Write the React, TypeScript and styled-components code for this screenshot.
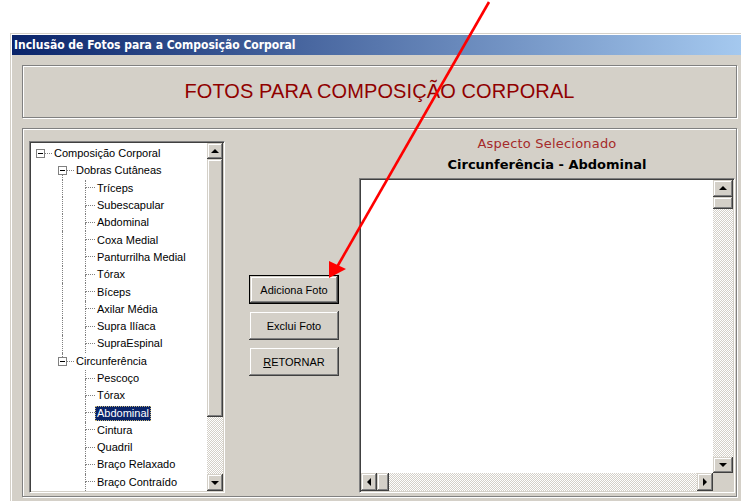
import React from 'react';
import styled, { createGlobalStyle, css } from 'styled-components';

const GlobalStyle = createGlobalStyle`
  html, body {
    margin: 0;
    padding: 0;
    background: #fff;
    overflow: hidden;
  }
  body {
    font-family: "Liberation Sans", Arial, sans-serif;
  }
`;

// classic 3D edges
const raised = css`
  background: #d4d0c8;
  box-shadow: inset -1px -1px #404040, inset 1px 1px #d4d0c8,
    inset -2px -2px #808080, inset 2px 2px #fff;
`;

const sunken = css`
  border: 1px solid;
  border-color: #808080 #fff #fff #808080;
  box-shadow: inset 1px 1px #404040, inset -1px -1px #d4d0c8;
  padding: 1px;
`;

const etched = css`
  border: 1px solid #808080;
  box-shadow: inset 1px 1px #fff, 1px 1px 0 #fff;
`;

const Page = styled.div`
  position: relative;
  width: 741px;
  height: 501px;
  padding: 33px 0 0 10px;
  box-sizing: border-box;
  overflow: hidden;
`;

const Window = styled.div`
  width: 739px;
  height: 480px;
  padding: 2px;
  box-sizing: border-box;
  background: #d4d0c8;
  box-shadow: inset 1px 1px #d4d0c8, inset 2px 2px #fff;
  display: flex;
  flex-direction: column;
`;

const TitleBar = styled.div`
  height: 20px;
  flex: none;
  display: flex;
  align-items: center;
  padding-left: 2px;
  background: linear-gradient(to right, #0a246a, #a6caf0);
  color: #fff;
  font-family: "DejaVu Sans Condensed", "DejaVu Sans", sans-serif;
  font-stretch: condensed;
  font-weight: bold;
  font-size: 12px;
  white-space: nowrap;
`;

const Body = styled.div`
  flex: 1;
  display: flex;
  flex-direction: column;
  gap: 10px;
  padding: 10px 10px 0 10px;
`;

const Header = styled.div`
  ${etched};
  height: 53px;
  box-sizing: border-box;
  display: flex;
  align-items: center;
  justify-content: center;
  color: #900000;
  font-size: 20px;
  letter-spacing: 0.1px;
`;

const MainPanel = styled.div`
  ${etched};
  height: 369px;
  box-sizing: border-box;
  display: flex;
  align-items: flex-start;
  padding: 6px 1px 0 6px;
`;

/* ---------- tree view ---------- */

const TreeBox = styled.div`
  ${sunken};
  width: 196px;
  height: 352px;
  margin-top: 6px;
  box-sizing: border-box;
  display: flex;
  background: #fff;
`;

const TreeList = styled.div`
  flex: 1;
  overflow: hidden;
  padding-top: 2px;
`;

const Row = styled.div<{ $indent: number }>`
  height: 17.3px;
  display: flex;
  align-items: stretch;
  padding-left: ${(p) => p.$indent}px;
`;

const ExpanderCell = styled.div`
  width: 9px;
  flex: none;
  display: flex;
  flex-direction: column;
  align-items: center;
`;

const StubLine = styled.div<{ $on: boolean }>`
  flex: 1;
  width: 0;
  border-left: 1px dotted ${(p) => (p.$on ? '#808080' : 'transparent')};
`;

const ExpandBox = styled.div`
  width: 9px;
  height: 9px;
  box-sizing: border-box;
  border: 1px solid #808080;
  background: #fff;
  display: flex;
  align-items: center;
  justify-content: center;
  flex: none;
`;

const Minus = styled.span`
  width: 5px;
  height: 1px;
  background: #000;
`;

const Tick = styled.div`
  width: 7px;
  align-self: center;
  border-top: 1px dotted #808080;
`;

const Guide = styled.div<{ $on: boolean }>`
  width: 23px;
  flex: none;
  box-sizing: border-box;
  border-left: 1px dotted ${(p) => (p.$on ? '#808080' : 'transparent')};
`;

const Connector = styled.div`
  width: 10px;
  flex: none;
  display: flex;
  flex-direction: column;
`;

const ConnectorTop = styled.div`
  height: 50%;
  box-sizing: border-box;
  border-left: 1px dotted #808080;
  border-bottom: 1px dotted #808080;
`;

const ConnectorBottom = styled.div`
  flex: 1;
  border-left: 1px dotted #808080;
`;

const Label = styled.span<{ $selected?: boolean }>`
  align-self: center;
  padding: 0 2px;
  height: 15px;
  line-height: 15px;
  font-size: 11px;
  color: #000;
  white-space: nowrap;
  ${(p) =>
    p.$selected &&
    css`
      background: #0a246a;
      color: #fff;
      outline: 1px dotted #c8b878;
      outline-offset: -1px;
    `}
`;

/* ---------- scroll bars ---------- */

const VScroll = styled.div<{ $width: number }>`
  width: ${(p) => p.$width}px;
  flex: none;
  display: flex;
  flex-direction: column;
`;

const HScroll = styled.div`
  display: flex;
  height: 100%;
`;

const ArrowButton = styled.div<{ $w: number; $h: number }>`
  ${raised};
  width: ${(p) => p.$w}px;
  height: ${(p) => p.$h}px;
  flex: none;
  display: flex;
  align-items: center;
  justify-content: center;
`;

const Thumb = styled.div<{ $w: number; $h: number }>`
  ${raised};
  width: ${(p) => p.$w}px;
  height: ${(p) => p.$h}px;
  flex: none;
`;

const Track = styled.div`
  flex: 1;
  background: repeating-conic-gradient(#d4d0c8 0 25%, #fff 0 50%) 0 0 / 2px 2px;
`;

const Arrow = styled.span<{ $dir: 'up' | 'down' | 'left' | 'right' }>`
  width: 0;
  height: 0;
  ${(p) =>
    p.$dir === 'up'
      ? css`
          border-left: 4px solid transparent;
          border-right: 4px solid transparent;
          border-bottom: 4px solid #000;
          margin-top: -1px;
        `
      : p.$dir === 'down'
      ? css`
          border-left: 4px solid transparent;
          border-right: 4px solid transparent;
          border-top: 4px solid #000;
        `
      : p.$dir === 'left'
      ? css`
          border-top: 4px solid transparent;
          border-bottom: 4px solid transparent;
          border-right: 4px solid #000;
        `
      : css`
          border-top: 4px solid transparent;
          border-bottom: 4px solid transparent;
          border-left: 4px solid #000;
        `}
`;

/* ---------- buttons ---------- */

const ButtonColumn = styled.div`
  width: 90px;
  margin-left: 24px;
  padding-top: 140px;
  display: flex;
  flex-direction: column;
  gap: 7px;
`;

const PushButton = styled.div<{ $default?: boolean }>`
  ${raised};
  height: 29px;
  box-sizing: border-box;
  display: flex;
  align-items: center;
  justify-content: center;
  font-size: 11px;
  color: #000;
  ${(p) =>
    p.$default &&
    css`
      border: 1px solid #000;
    `}
`;

const Mnemonic = styled.span`
  text-decoration: underline;
`;

/* ---------- photo area ---------- */

const PhotoColumn = styled.div`
  flex: 1;
  margin-left: 20px;
  display: flex;
  flex-direction: column;
  align-items: stretch;
`;

const Caption = styled.div`
  line-height: 18px;
  text-align: center;
  color: #a52a2a;
  font-family: "DejaVu Sans", sans-serif;
  font-size: 13px;
  letter-spacing: 0.2px;
`;

const Heading = styled.div`
  margin-top: 3px;
  line-height: 18px;
  text-align: center;
  color: #000;
  font-family: "DejaVu Sans", sans-serif;
  font-weight: bold;
  font-size: 13px;
`;

const PhotoFrame = styled.div`
  ${sunken};
  margin-top: 4px;
  height: 315px;
  box-sizing: border-box;
  display: grid;
  grid-template-columns: 1fr 20px;
  grid-template-rows: 1fr 18px;
  background: #fff;
`;

const PhotoCanvas = styled.div`
  background: #fff;
`;

const Corner = styled.div`
  background: #d4d0c8;
`;

const Overlay = styled.svg`
  position: absolute;
  left: 0;
  top: 0;
  pointer-events: none;
`;

type Leaf = { label: string; selected?: boolean };

const dobras: Leaf[] = [
  { label: 'Tríceps' },
  { label: 'Subescapular' },
  { label: 'Abdominal' },
  { label: 'Coxa Medial' },
  { label: 'Panturrilha Medial' },
  { label: 'Tórax' },
  { label: 'Bíceps' },
  { label: 'Axilar Média' },
  { label: 'Supra Ilíaca' },
  { label: 'SupraEspinal' },
];

const circunferencia: Leaf[] = [
  { label: 'Pescoço' },
  { label: 'Tórax' },
  { label: 'Abdominal', selected: true },
  { label: 'Cintura' },
  { label: 'Quadril' },
  { label: 'Braço Relaxado' },
  { label: 'Braço Contraído' },
];

const Branch = ({ label, indent, up, down }: { label: string; indent: number; up: boolean; down: boolean }) => (
  <Row $indent={indent}>
    <ExpanderCell>
      <StubLine $on={up} />
      <ExpandBox>
        <Minus />
      </ExpandBox>
      <StubLine $on={down} />
    </ExpanderCell>
    <Tick />
    <Label>{label}</Label>
  </Row>
);

const Leaves = ({ items, guide }: { items: Leaf[]; guide: boolean }) => (
  <>
    {items.map((item, i) => (
      <Row key={item.label + i} $indent={31}>
        <Guide $on={guide} />
        <Connector>
          <ConnectorTop />
          <ConnectorBottom />
        </Connector>
        <Label $selected={item.selected}>{item.label}</Label>
      </Row>
    ))}
  </>
);

const App = () => {
  return (
    <Page>
      <GlobalStyle />
      <Window>
        <TitleBar>Inclusão de Fotos para a Composição Corporal</TitleBar>
        <Body>
          <Header>FOTOS PARA COMPOSIÇÃO CORPORAL</Header>
          <MainPanel>
            <TreeBox>
              <TreeList>
                <Branch label="Composição Corporal" indent={5} up={false} down={false} />
                <Branch label="Dobras Cutâneas" indent={27} up={false} down={true} />
                <Leaves items={dobras} guide={true} />
                <Branch label="Circunferência" indent={27} up={true} down={false} />
                <Leaves items={circunferencia} guide={false} />
              </TreeList>
              <VScroll $width={16}>
                <ArrowButton $w={16} $h={16}>
                  <Arrow $dir="up" />
                </ArrowButton>
                <Thumb $w={16} $h={258} />
                <Track />
                <ArrowButton $w={16} $h={17}>
                  <Arrow $dir="down" />
                </ArrowButton>
              </VScroll>
            </TreeBox>

            <ButtonColumn>
              <PushButton $default>Adiciona Foto</PushButton>
              <PushButton>Exclui Foto</PushButton>
              <PushButton>
                <Mnemonic>R</Mnemonic>ETORNAR
              </PushButton>
            </ButtonColumn>

            <PhotoColumn>
              <Caption>Aspecto Selecionado</Caption>
              <Heading>Circunferência - Abdominal</Heading>
              <PhotoFrame>
                <PhotoCanvas />
                <VScroll $width={20}>
                  <ArrowButton $w={20} $h={17}>
                    <Arrow $dir="up" />
                  </ArrowButton>
                  <Thumb $w={20} $h={12} />
                  <Track />
                  <ArrowButton $w={20} $h={16}>
                    <Arrow $dir="down" />
                  </ArrowButton>
                </VScroll>
                <HScroll>
                  <ArrowButton $w={16} $h={18}>
                    <Arrow $dir="left" />
                  </ArrowButton>
                  <Thumb $w={12} $h={18} />
                  <Track />
                  <ArrowButton $w={16} $h={18}>
                    <Arrow $dir="right" />
                  </ArrowButton>
                </HScroll>
                <Corner />
              </PhotoFrame>
            </PhotoColumn>
          </MainPanel>
        </Body>
      </Window>

      {/* red pointer towards the add button */}
      <Overlay width={741} height={501} viewBox="0 0 741 501">
        <line x1={489} y1={2} x2={337} y2={267} stroke="#ff0000" strokeWidth={2.6} />
        <polygon points="329,278 329,261 346,269" fill="#ff0000" />
      </Overlay>
    </Page>
  );
};

export default App;
